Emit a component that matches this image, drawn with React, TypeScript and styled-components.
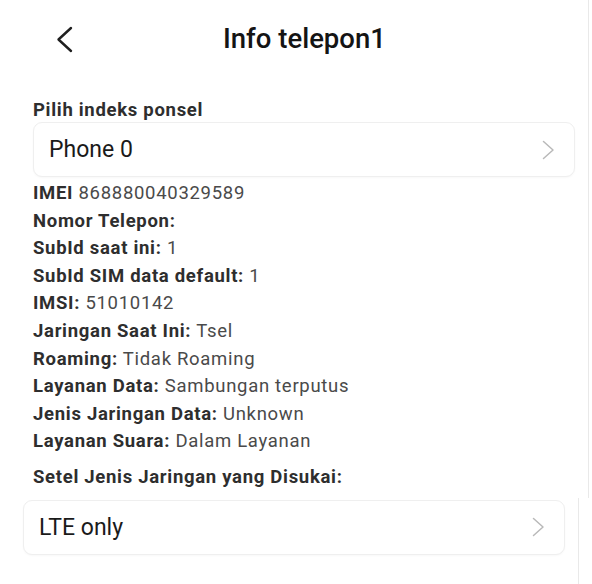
import styled, { createGlobalStyle } from "styled-components";

// ------ data ------
type InfoRow = {
  label: string;
  value: string;
};

const infoRows: InfoRow[] = [
  { label: "IMEI", value: "868880040329589" },
  { label: "Nomor Telepon:", value: "" },
  { label: "SubId saat ini:", value: "1" },
  { label: "SubId SIM data default:", value: "1" },
  { label: "IMSI:", value: "51010142" },
  { label: "Jaringan Saat Ini:", value: "Tsel" },
  { label: "Roaming:", value: "Tidak Roaming" },
  { label: "Layanan Data:", value: "Sambungan terputus" },
  { label: "Jenis Jaringan Data:", value: "Unknown" },
  { label: "Layanan Suara:", value: "Dalam Layanan" },
];

function BackIcon() {
  return (
    <svg width="18" height="28" viewBox="0 0 18 28" fill="none">
      <path
        d="M15 3 L2.5 14.5 L15 26"
        stroke="#1f1f1f"
        strokeWidth="2.4"
        strokeLinecap="round"
        strokeLinejoin="round"
      />
    </svg>
  );
}

function ChevronRight() {
  return (
    <svg width="13" height="20" viewBox="0 0 13 20" fill="none">
      <path
        d="M1.5 1.5 L11 10 L1.5 18.5"
        stroke="#b9b9b9"
        strokeWidth="1.5"
        strokeLinecap="round"
        strokeLinejoin="round"
      />
    </svg>
  );
}

export default function App() {
  return (
    <>
      <GlobalStyle />
      <Screen>
        <Upper>
          <Header>
            <BackButton aria-label="Kembali">
              <BackIcon />
            </BackButton>
            <Title>Info telepon1</Title>
          </Header>

          {/* ----- phone index picker ----- */}
          <SectionLabel>Pilih indeks ponsel</SectionLabel>
          <SelectCard>
            <span>Phone 0</span>
            <ChevronRight />
          </SelectCard>

          {/* ----- phone info list ----- */}
          <InfoList>
            {infoRows.map((row) => (
              <InfoItem key={row.label}>
                <b>{row.label}</b>
                {row.value ? ` ${row.value}` : null}
              </InfoItem>
            ))}
          </InfoList>
          <NetworkLabel>Setel Jenis Jaringan yang Disukai:</NetworkLabel>
        </Upper>

        {/* ----- preferred network picker ----- */}
        <Lower>
          <SelectCard>
            <span>LTE only</span>
            <ChevronRight />
          </SelectCard>
        </Lower>
      </Screen>
    </>
  );
}

// ------- component styles ------
const GlobalStyle = createGlobalStyle`
  * {
    box-sizing: border-box;
  }

  body {
    margin: 0;
    background: #ffffff;
    font-family: Roboto, "Liberation Sans", sans-serif;
  }
`;

const Screen = styled.main`
  width: 592px;
  height: 584px;
  background: #ffffff;
  overflow: hidden;
  display: flex;
  flex-direction: column;
`;

const Upper = styled.section`
  width: 589px;
  padding: 0 13px 7px 33px;
  border-right: 1px solid #e9e9e9;
`;

const Lower = styled.section`
  flex: 1;
  width: 579px;
  padding: 2px 13px 0 23px;
  border-right: 1px solid #e9e9e9;
`;

const Header = styled.header`
  height: 77px;
  display: flex;
  align-items: center;
  margin-left: -33px;
  padding-left: 56px;
`;

const BackButton = styled.button`
  border: none;
  background: transparent;
  padding: 0;
  width: 18px;
  height: 28px;
  display: flex;
  cursor: pointer;
`;

const Title = styled.h1`
  margin: 0 0 0 149px;
  font-size: 27.5px;
  font-weight: 500;
  color: #141414;
  line-height: 32px;
`;

const SectionLabel = styled.div`
  margin-top: 21px;
  font-size: 18.5px;
  line-height: 24px;
  font-weight: 700;
  letter-spacing: 0.7px;
  color: #2e2e2e;
`;

const NetworkLabel = styled(SectionLabel)`
  margin-top: 7px;
  line-height: 28px;
`;

const SelectCard = styled.div`
  height: 55px;
  display: flex;
  align-items: center;
  justify-content: space-between;
  padding: 0 19px 0 15px;
  border: 1px solid #efefef;
  border-radius: 9px;
  background: #ffffff;
  box-shadow: 0 1px 2px rgba(0, 0, 0, 0.03);
  font-size: 23px;
  color: #1a1a1a;
`;

const InfoList = styled.ul`
  list-style: none;
  margin: 3px 0 0;
  padding: 0;
`;

const InfoItem = styled.li`
  font-size: 18.5px;
  line-height: 27.6px;
  color: #4a4a4a;
  letter-spacing: 0.7px;

  & > b {
    font-weight: 700;
    color: #2e2e2e;
  }
`;
